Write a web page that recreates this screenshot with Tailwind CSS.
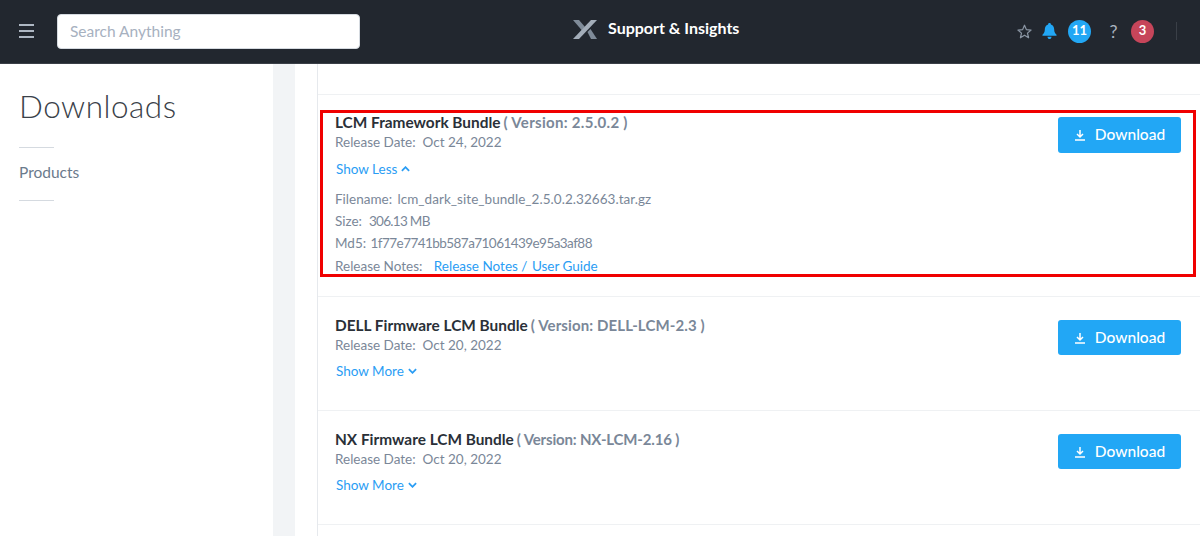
<!DOCTYPE html>
<html lang="en">
<head>
    <meta charset="UTF-8">
    <title>Downloads</title>
    <script src="https://cdn.jsdelivr.net/npm/@tailwindcss/browser@4"></script>
</head>
<body class="bg-white font-['Lato','Liberation_Sans',sans-serif] h-[536px] overflow-hidden">
    <!-- Top bar -->
    <header class="h-[64px] bg-[#22272f] border-b border-[#3a3f47] flex items-center relative">
        <button class="ml-[19px] mb-[1px] w-[15px] flex flex-col gap-[4px]">
            <span class="h-[2px] bg-[#aeb7c3]"></span>
            <span class="h-[2px] bg-[#aeb7c3]"></span>
            <span class="h-[2px] bg-[#aeb7c3]"></span>
        </button>
        <div class="ml-[23px] w-[303px] h-[35px] bg-white border border-[#d5dae0] rounded-[4px] flex items-center px-[12px] text-[15.5px] text-[#a7b1bf]">Search Anything</div>

        <div class="absolute left-[573px] top-[19px] flex items-center">
            <svg width="24" height="19" viewBox="0 0 24 19">
                <path d="M0 0h6l6 7-3 3.500z" fill="#7f8b99"/>
                <path d="M24 0h-6L0 19h6z" fill="#a3adb9"/>
                <path d="M14.500 12l3-3L24 19h-6z" fill="#7f8b99"/>
            </svg>
            <span class="ml-[11px] -mt-[3px] text-[16px] font-bold text-white">Support &amp; Insights</span>
        </div>

        <div class="ml-auto flex items-center mr-[23px] -mt-[1px]">
            <svg width="15" height="15" viewBox="0 0 24 24" fill="none" stroke="#8a95a3" stroke-width="2" stroke-linejoin="round"><path d="M12 2l3 7 7.500.7-5.700 4.900 1.700 7.400L12 18l-6.500 4 1.700-7.400L1.500 9.700 9 9z"/></svg>
            <svg class="ml-[10px]" width="15" height="16" viewBox="0 0 16 17" fill="#22a7f5"><path d="M8 0c1 0 1.500.7 1.500 1.500C12 2.200 13 4.300 13 7c0 3 1 4 2.500 5.500v1H.5v-1C2 11 3 10 3 7c0-2.700 1-4.800 3.500-5.500C6.500.7 7 0 8 0z"/><path d="M5.800 14.500h4.400C10 16 9.100 17 8 17s-2-1-2.200-2.500z"/></svg>
            <span class="ml-[11px] w-[23px] h-[23px] rounded-full bg-[#22a7f5] text-white text-[13px] font-bold flex items-center justify-center">11</span>
            <span class="ml-[18px] w-[9px] text-center text-[#aab3bf] text-[18px] leading-[23px]">?</span>
            <span class="ml-[13px] w-[23px] h-[23px] rounded-full bg-[#c6455a] text-white text-[13px] font-bold flex items-center justify-center">3</span>
            <span class="ml-[22px] w-px h-[18px] bg-[#3a3f47]"></span>
        </div>
    </header>

    <div class="flex h-[472px]">
        <!-- Left nav -->
        <aside class="w-[273px] pl-[19px] pt-[23px]">
            <h1 class="text-[31.5px] font-light text-[#3a4149] leading-[38px] tracking-[0.5px]">Downloads</h1>
            <div class="w-[35px] h-px bg-[#d5dae0] mt-[22px]"></div>
            <div class="text-[15.5px] text-[#6b7a8c] leading-[20px] mt-[14px]">Products</div>
            <div class="w-[35px] h-px bg-[#d5dae0] mt-[18px]"></div>
        </aside>
        <div class="w-[22px] bg-[#f2f4f6]"></div>
        <div class="w-[22px] border-r border-[#e6e9ed] box-content"></div>

        <!-- Download list -->
        <main class="flex-1 min-w-0">
            <div class="h-[31px] border-b border-[#eff1f3]"></div>

            <div class="h-[202px] border-b border-[#eff1f3] pt-[15px] pl-[2px] pr-[4px]">
                <div class="h-[167px] border-[3px] border-[#f00000] pl-[12px] pr-[12px] flex justify-between">
                    <div>
                        <div class="text-[15.4px] leading-[20px] -mt-[1px] font-bold text-[#2a3038]">LCM Framework Bundle<span class="ml-[3px] text-[15px] text-[#7a8798] tracking-[0.3px]">( Version: 2.5.0.2 )</span></div>
                        <div class="text-[13.5px] leading-[20px] text-[#7a8798]">Release Date:&nbsp; Oct 24, 2022</div>
                        <div class="text-[13.5px] leading-[20px] mt-[7px] pl-[1px] text-[#2a9df4] flex items-center gap-[4px]">Show Less
                            <svg width="9" height="6" viewBox="0 0 10 6" fill="none" stroke="#2a9df4" stroke-width="2"><path d="M1 5l4-4 4 4"/></svg>
                        </div>
                        <div class="text-[13.5px] leading-[22px] text-[#7a8798] mt-[9px]">
                            <div>Filename: <span class="ml-[2px] tracking-[0.05px]">lcm_dark_site_bundle_2.5.0.2.32663.tar.gz</span></div>
                            <div>Size:&nbsp; <span class="tracking-[-0.7px]">306.13 MB</span></div>
                            <div>Md5: <span class="ml-[1px] tracking-[-0.55px]">1f77e7741bb587a71061439e95a3af88</span></div>
                            <div class="mt-[1px]">Release Notes: <span class="ml-[8px] text-[#2a9df4]">Release Notes / <span class="ml-[1px]">User Guide</span></span></div>
                        </div>
                    </div>
                    <button class="w-[123px] h-[36px] mt-[4px] bg-[#22a7f5] rounded-[3px] text-white text-[15.5px] font-medium flex items-center justify-center gap-[9px]">
                        <svg width="12" height="12" viewBox="0 0 12 12" fill="none" stroke="white" stroke-width="1.500"><path d="M6 1v6.500M3 5l3 3 3-3M1 11h10"/></svg>
                        Download
                    </button>
                </div>
            </div>

            <div class="h-[114px] border-b border-[#eff1f3] pl-[17px] pr-[19px] pt-[18px] flex justify-between">
                <div>
                    <div class="text-[15.4px] leading-[20px] font-bold text-[#2a3038]">DELL Firmware LCM Bundle<span class="ml-[3px] text-[15px] text-[#7a8798] tracking-[0.12px]">( Version: DELL-LCM-2.3 )</span></div>
                    <div class="text-[13.5px] leading-[20px] text-[#7a8798]">Release Date:&nbsp; Oct 20, 2022</div>
                    <div class="text-[13.5px] leading-[20px] mt-[6px] pl-[1px] text-[#2a9df4] flex items-center gap-[4px]">Show More
                        <svg width="9" height="6" viewBox="0 0 10 6" fill="none" stroke="#2a9df4" stroke-width="2"><path d="M1 1l4 4 4-4"/></svg>
                    </div>
                </div>
                <button class="w-[123px] h-[35px] mt-[5px] bg-[#22a7f5] rounded-[3px] text-white text-[15.5px] font-medium flex items-center justify-center gap-[9px]">
                    <svg width="12" height="12" viewBox="0 0 12 12" fill="none" stroke="white" stroke-width="1.500"><path d="M6 1v6.500M3 5l3 3 3-3M1 11h10"/></svg>
                    Download
                </button>
            </div>

            <div class="h-[114px] border-b border-[#eff1f3] pl-[17px] pr-[19px] pt-[18px] flex justify-between">
                <div>
                    <div class="text-[15.4px] leading-[20px] font-bold text-[#2a3038]">NX Firmware LCM Bundle<span class="ml-[3px] text-[15px] text-[#7a8798] tracking-[-0.17px]">( Version: NX-LCM-2.16 )</span></div>
                    <div class="text-[13.5px] leading-[20px] text-[#7a8798]">Release Date:&nbsp; Oct 20, 2022</div>
                    <div class="text-[13.5px] leading-[20px] mt-[6px] pl-[1px] text-[#2a9df4] flex items-center gap-[4px]">Show More
                        <svg width="9" height="6" viewBox="0 0 10 6" fill="none" stroke="#2a9df4" stroke-width="2"><path d="M1 1l4 4 4-4"/></svg>
                    </div>
                </div>
                <button class="w-[123px] h-[35px] mt-[5px] bg-[#22a7f5] rounded-[3px] text-white text-[15.5px] font-medium flex items-center justify-center gap-[9px]">
                    <svg width="12" height="12" viewBox="0 0 12 12" fill="none" stroke="white" stroke-width="1.500"><path d="M6 1v6.500M3 5l3 3 3-3M1 11h10"/></svg>
                    Download
                </button>
            </div>
        </main>
    </div>
</body>
</html>
